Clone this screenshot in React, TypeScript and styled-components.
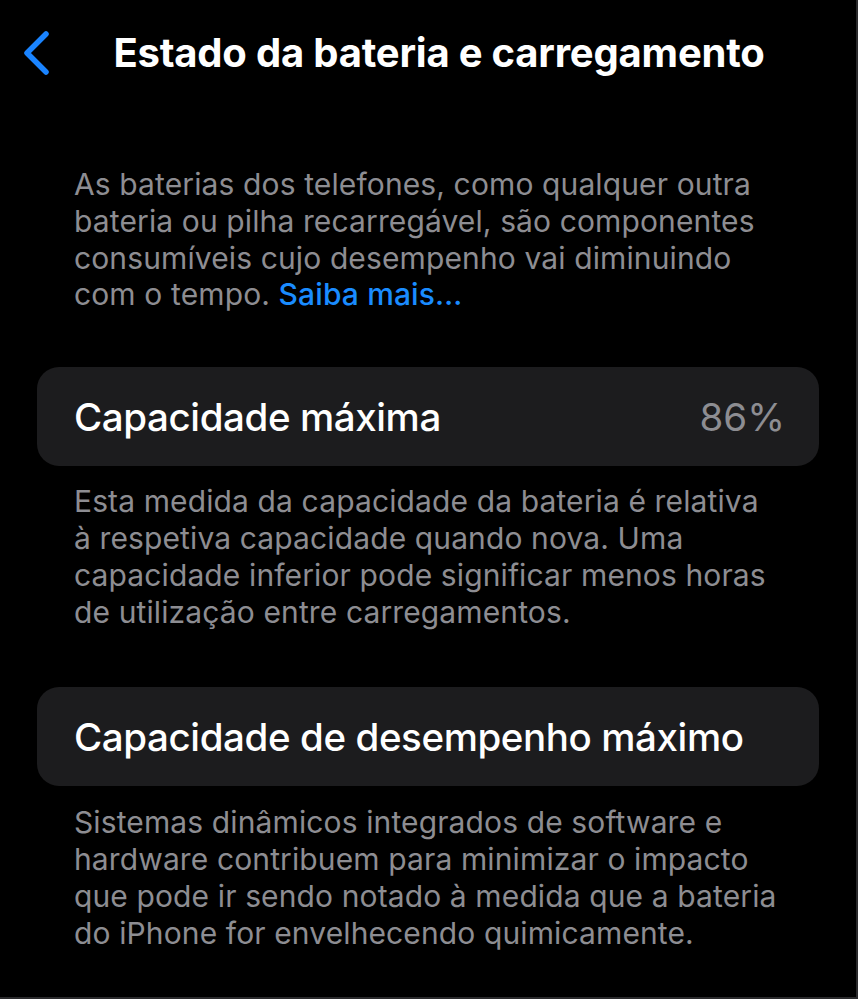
import React from "react";
import styled, { createGlobalStyle } from "styled-components";

const Global = createGlobalStyle`
  html, body { margin: 0; padding: 0; background: #000; }
  body { font-family: Inter, "Noto Sans", sans-serif; -webkit-font-smoothing: antialiased; }
`;

const Screen = styled.div`
  width: 858px;
  height: 999px;
  box-sizing: border-box;
  background: #000;
  border-right: 2px solid #2a2a2c;
  border-bottom: 2px solid #2a2a2c;
  overflow: hidden;
  display: flex;
  flex-direction: column;
`;

const NavBar = styled.header`
  position: relative;
  height: 104px;
  display: flex;
  align-items: center;
  justify-content: center;
`;

const BackButton = styled.button`
  position: absolute;
  left: 18px;
  top: 28px;
  width: 36px;
  height: 50px;
  padding: 0;
  border: 0;
  background: transparent;
  display: flex;
  align-items: center;
  justify-content: center;
`;

const Title = styled.h1`
  margin: 0;
  font-size: 40px;
  font-weight: 700;
  color: #fff;
  letter-spacing: -0.2px;
  white-space: nowrap;
  transform: translateX(11px);
`;

const Content = styled.main`
  padding: 62px 37px 0 37px;
  display: flex;
  flex-direction: column;
`;

const Footnote = styled.p<{ $top?: number }>`
  margin: ${(p) => p.$top ?? 0}px 0 0 0;
  padding: 0 37px;
  font-size: 30px;
  line-height: 36.8px;
  color: #8d8d92;
  letter-spacing: 0.12px;
  white-space: nowrap;
`;

const Link = styled.a`
  color: #1a8cff;
  text-decoration: none;
  font-weight: 500;
`;

const Card = styled.section<{ $top: number }>`
  margin-top: ${(p) => p.$top}px;
  height: 99px;
  border-radius: 22px;
  background: #1c1c1e;
  display: flex;
  align-items: center;
  justify-content: space-between;
  padding: 0 34px 0 37px;
`;

const CardLabel = styled.span`
  font-size: 38.5px;
  color: #fff;
  font-weight: 500;
  letter-spacing: -0.4px;
`;

const CardValue = styled.span`
  font-size: 38.5px;
  color: #8d8d92;
  font-weight: 400;
`;

export default function App() {
  return (
    <>
      <Global />
      <Screen>
        <NavBar>
          <BackButton aria-label="Voltar">
            <svg width="30" height="46" viewBox="0 0 30 46">
              <path
                d="M25 4 L6 23 L25 42"
                fill="none"
                stroke="#1a84ff"
                strokeWidth="5.5"
                strokeLinecap="round"
                strokeLinejoin="round"
              />
            </svg>
          </BackButton>
          <Title>Estado da bateria e carregamento</Title>
        </NavBar>
        <Content>
          <Footnote>
            As baterias dos telefones, como qualquer outra
            <br />
            bateria ou pilha recarregável, são componentes
            <br />
            consumíveis cujo desempenho vai diminuindo
            <br />
            com o tempo. <Link href="#">Saiba mais…</Link>
          </Footnote>
          <Card $top={54}>
            <CardLabel>Capacidade máxima</CardLabel>
            <CardValue>86%</CardValue>
          </Card>
          <Footnote $top={17}>
            Esta medida da capacidade da bateria é relativa
            <br />
            à respetiva capacidade quando nova. Uma
            <br />
            capacidade inferior pode significar menos horas
            <br />
            de utilização entre carregamentos.
          </Footnote>
          <Card $top={57}>
            <CardLabel>Capacidade de desempenho máximo</CardLabel>
          </Card>
          <Footnote $top={18}>
            Sistemas dinâmicos integrados de software e
            <br />
            hardware contribuem para minimizar o impacto
            <br />
            que pode ir sendo notado à medida que a bateria
            <br />
            do iPhone for envelhecendo quimicamente.
          </Footnote>
        </Content>
      </Screen>
    </>
  );
}
